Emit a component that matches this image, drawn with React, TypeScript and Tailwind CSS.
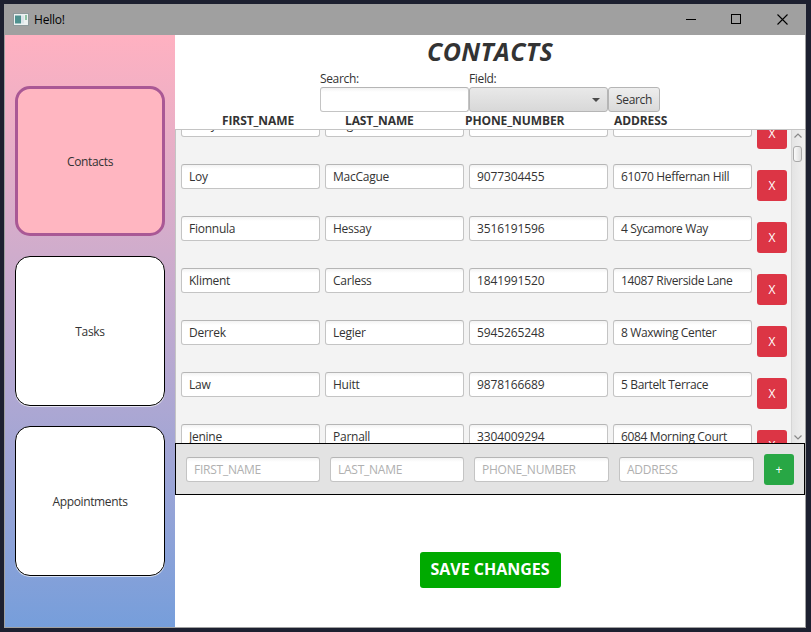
const contacts = [
  ['Corly', 'Regelous', '4417702918', '77 Norton Pass'],
  ['Loy', 'MacCague', '9077304455', '61070 Heffernan Hill'],
  ['Fionnula', 'Hessay', '3516191596', '4 Sycamore Way'],
  ['Kliment', 'Carless', '1841991520', '14087 Riverside Lane'],
  ['Derrek', 'Legier', '5945265248', '8 Waxwing Center'],
  ['Law', 'Huitt', '9878166689', '5 Bartelt Terrace'],
  ['Jenine', 'Parnall', '3304009294', '6084 Morning Court'],
];

const fieldTracking = ['tracking-[-0.25px]', 'tracking-[-0.25px]', 'tracking-[-0.1px]', 'tracking-[-0.35px]'];

const fieldBase =
  'h-[25px] shrink-0 rounded-[3px] border border-[#c4c4c4] border-t-[#b5b5b5] bg-white bg-linear-to-b from-[#f3f3f3] to-white to-[4px] px-[7px] text-[12px] leading-[24px] whitespace-nowrap overflow-hidden';

function Field({ value, width, tracking = '' }: { value: string; width: string; tracking?: string }) {
  return <div className={`${fieldBase} ${width} ${tracking} text-[#333]`}>{value}</div>;
}

function Placeholder({ text, width }: { text: string; width: string }) {
  return <div className={`${fieldBase} ${width} tracking-[-0.25px] text-[#b0b0b0]`}>{text}</div>;
}

function TitleBar() {
  return (
    <div className="flex h-[31px] shrink-0 items-center bg-[#a0a0a0] text-black">
      <svg className="ml-[8px]" width="16" height="13" viewBox="0 0 16 13">
        <rect x="0.5" y="0.5" width="15" height="12" fill="#eef2f2" stroke="#8e9a9c" />
        <rect x="2" y="2.5" width="6" height="8" fill="#4f918f" />
        <rect x="8" y="2.5" width="3" height="8" fill="#dce5ea" />
        <rect x="12" y="2" width="2" height="5" fill="#8fc3a5" />
      </svg>
      <span className="ml-[5px] text-[12px] tracking-[-0.2px]">Hello!</span>
      <svg className="mr-[17px] ml-auto" width="102" height="11" viewBox="0 0 102 11" fill="none" stroke="black" shapeRendering="crispEdges">
        <path d="M0 5.5H10M45.5 0.5H54.5V9.5H45.5Z" />
        <path d="M91.500 0.500L101.500 10.500M101.500 0.500L91.500 10.500" shapeRendering="auto" strokeWidth="1.1" />
      </svg>
    </div>
  );
}

function Sidebar() {
  const tile = 'flex h-[150px] w-[150px] items-center justify-center rounded-[15px] pt-[2px] text-[12px] tracking-[-0.35px] text-[#333]';
  return (
    <div className="flex w-[170px] shrink-0 flex-col items-center justify-center gap-5 bg-linear-to-b from-[#ffb1c1] to-[#769edb]">
      <div className={`${tile} border-[3px] border-[#a95895] bg-[#ffb6c1]`}>Contacts</div>
      <div className={`${tile} border border-black bg-white shadow-[0_1px_0_#ffffffb0]`}>Tasks</div>
      <div className={`${tile} border border-black bg-white shadow-[0_1px_0_#ffffffb0]`}>Appointments</div>
    </div>
  );
}

function Header() {
  return (
    <div className="flex h-[94px] shrink-0 flex-col">
      <h1 className="h-[35px] text-center text-[25px] leading-[33px] font-bold tracking-[0.35px] italic">CONTACTS</h1>
      <div className="ml-[145px] flex h-[17px] text-[12px] leading-[18px] tracking-[-0.35px]">
        <span className="w-[149px]">Search:</span>
        <span>Field:</span>
      </div>
      <div className="ml-[145px] flex">
        <Field value="" width="w-[149px]" />
        <div className="flex h-[25px] w-[139px] items-center justify-end rounded-[3px] border border-[#b5b5b5] bg-linear-to-b from-[#e9e9e9] to-[#d8d8d8] pr-[7px]">
          <svg width="8" height="4" viewBox="0 0 8 4">
            <path d="M0 0H8L4 4Z" fill="#4a4a4a" />
          </svg>
        </div>
        <div className="h-[25px] w-[52px] rounded-[3px] border border-[#b5b5b5] bg-linear-to-b from-[#eeeeee] to-[#dadada] text-center text-[12px] leading-[24px] tracking-[-0.35px]">
          Search
        </div>
      </div>
      <div className="ml-[47px] flex h-[17px] text-[12px] leading-[17px] font-bold tracking-[-0.1px]">
        <span className="w-[123px]">FIRST_NAME</span>
        <span className="w-[120px]">LAST_NAME</span>
        <span className="w-[149px]">PHONE_NUMBER</span>
        <span>ADDRESS</span>
      </div>
    </div>
  );
}

function ScrollBar() {
  return (
    <div className="flex w-[14px] shrink-0 flex-col items-center border-l border-[#d6d6d6] bg-linear-to-r from-[#e4e4e4] to-[#f0f0f0] pr-[2px]">
      <svg className="mt-[3px]" width="8" height="5" viewBox="0 0 8 5" fill="none" stroke="#888" strokeWidth="1.2">
        <path d="M0.500 4.500L4 1L7.500 4.500" />
      </svg>
      <div className="mt-[8px] h-[16px] w-[9px] rounded-[3px] border border-[#a9a9a9] bg-linear-to-r from-[#fafafa] to-[#dedede]" />
      <svg className="mt-auto mb-[3px]" width="8" height="5" viewBox="0 0 8 5" fill="none" stroke="#888" strokeWidth="1.2">
        <path d="M0.500 0.500L4 4L7.500 0.500" />
      </svg>
    </div>
  );
}

function ContactList() {
  return (
    <div className="flex h-[314px] shrink-0 border-t border-l border-[#c4c4c4] bg-[#f3f3f3]">
      <div className="flex-1 overflow-hidden pl-[5px]">
        <div className="-mt-[18px]">
          {contacts.map((row) => (
            <div key={row[0]} className="flex h-[52px] items-start gap-[5px]">
              {row.map((value, column) => (
                <Field key={value} value={value} width="w-[139px]" tracking={fieldTracking[column]} />
              ))}
              <div className="mt-[6px] h-[31px] w-[30px] rounded-[3px] bg-[#dc3545] text-center text-[12px] leading-[31px] text-white">X</div>
            </div>
          ))}
        </div>
      </div>
      <ScrollBar />
    </div>
  );
}

function AddRow() {
  return (
    <div className="flex h-[52px] shrink-0 items-center gap-[10px] border border-black bg-[#e3e3e3] pl-[10px]">
      <Placeholder text="FIRST_NAME" width="w-[134px]" />
      <Placeholder text="LAST_NAME" width="w-[134px]" />
      <Placeholder text="PHONE_NUMBER" width="w-[135px]" />
      <Placeholder text="ADDRESS" width="w-[135px]" />
      <div className="h-[31px] w-[30px] rounded-[3px] bg-[#28a745] text-center text-[12px] leading-[32px] text-white">+</div>
    </div>
  );
}

export default function App() {
  return (
    <div className="h-[632px] w-[811px] overflow-hidden bg-[#1d2030] pt-[4px] pl-[4px] font-['Open_Sans',sans-serif] text-[#333]">
      <div className="flex h-[624px] w-[802px] flex-col border border-t-0 border-[#a0a0a0] bg-white">
        <TitleBar />
        <div className="flex min-h-0 flex-1">
          <Sidebar />
          <div className="flex w-[630px] flex-col bg-white">
            <Header />
            <ContactList />
            <AddRow />
            <div className="mt-[57px] h-[36px] w-[141px] self-center rounded-[3px] bg-[#00aa00] text-center text-[16px] leading-[35px] font-bold text-white">
              SAVE CHANGES
            </div>
          </div>
        </div>
      </div>
    </div>
  );
}
